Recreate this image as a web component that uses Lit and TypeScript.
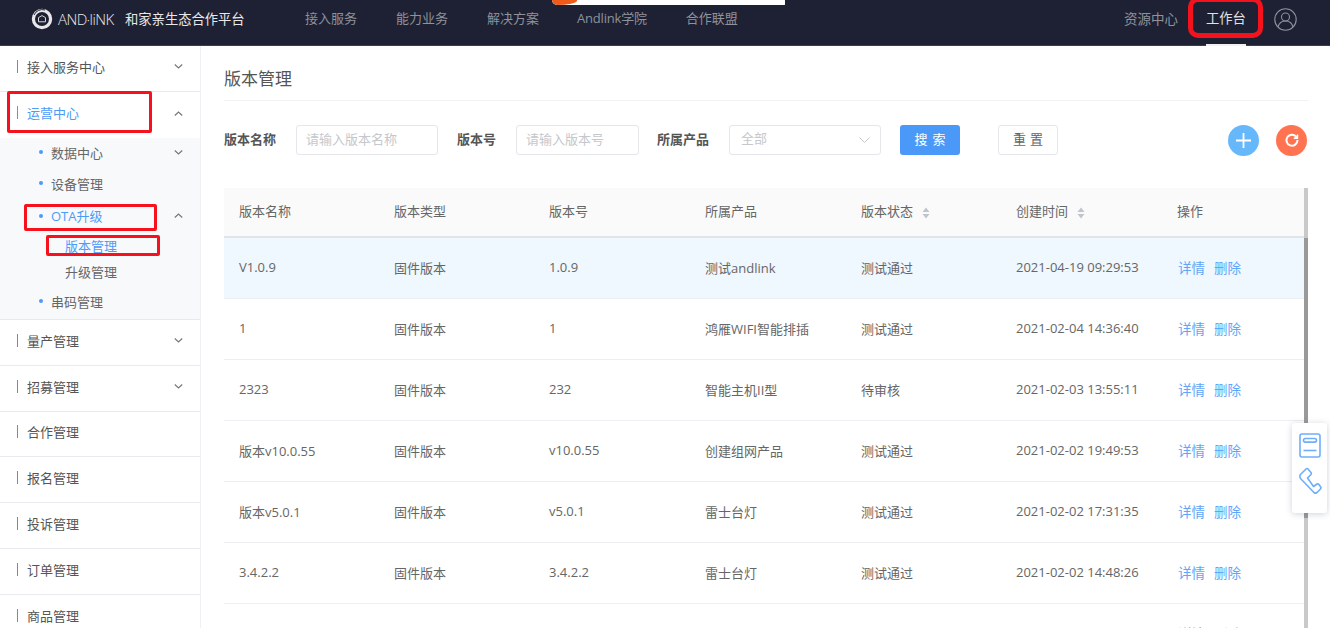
import { LitElement, html, css } from "lit";
import { customElement } from "lit/decorators.js";

const rows = [
  ["V1.0.9", "固件版本", "1.0.9", "测试andlink", "测试通过", "2021-04-19 09:29:53"],
  ["1", "固件版本", "1", "鸿雁WIFI智能排插", "测试通过", "2021-02-04 14:36:40"],
  ["2323", "固件版本", "232", "智能主机II型", "待审核", "2021-02-03 13:55:11"],
  ["版本v10.0.55", "固件版本", "v10.0.55", "创建组网产品", "测试通过", "2021-02-02 19:49:53"],
  ["版本v5.0.1", "固件版本", "v5.0.1", "雷士台灯", "测试通过", "2021-02-02 17:31:35"],
  ["3.4.2.2", "固件版本", "3.4.2.2", "雷士台灯", "测试通过", "2021-02-02 14:48:26"],
  ["3.4.2.1", "固件版本", "3.4.2.1", "智能主机II型", "待审核", "2021-02-01 10:12:08"],
];

const chevron = (up: boolean) => html`<svg class="chev" width="9" height="5" viewBox="0 0 9 5" fill="none" stroke="#74787f" stroke-width="1.2"><path d="${up ? "M.8 4.500L4.500 1 8.200 4.500" : "M.8.5L4.500 4 8.200.5"}"/></svg>`;
const sorter = html`<svg class="sort" width="8" height="12" viewBox="0 0 8 12" fill="#c0c4cc"><path d="M4 .5L7.500 5H.5zM4 11.500L.5 7h7z"/></svg>`;

@customElement("app-root")
export class AppRoot extends LitElement {
  static styles = css`
    :host { display: block; position: relative; width: 100%; height: 100vh; overflow: hidden; background: #fff;
      font-family: "Open Sans", "Noto Sans CJK SC", sans-serif; font-size: 13px; color: #666; }
    .top { height: 45px; background: #1e2133; border-bottom: 1px solid #3a3d4c; display: flex; align-items: center; position: relative; }
    .logo { display: flex; align-items: center; margin-left: 31px; width: 274px; color: #e8e8ea; margin-top: -8px; }
    .logoword { font-size: 15px; font-weight: 300; letter-spacing: -.6px; margin-left: 5px; width: 67px; white-space: nowrap; }
    .platform { font-size: 13.3px; white-space: nowrap; }
    .nav { display: flex; flex: 1; gap: 39px; color: #8f919b; margin-top: -10px; }
    .nav .al { letter-spacing: -.2px; margin: 0 0 0 -1px; }
    .right { display: flex; align-items: center; color: #8f919b; }
    .res { margin-right: 28px; font-size: 13.5px; margin-top: -10px; }
    .work { color: #e2e2e4; width: 40px; margin-right: 28px; font-size: 13.3px; margin-top: -10px; white-space: nowrap; }
    .under { position: absolute; left: 1206px; top: 44px; width: 40px; height: 2px; background: #f1f1f1; }
    .user { margin-right: 33px; display: block; margin-top: -7px; }
    .strip { position: absolute; left: 552px; top: 0; width: 233px; height: 5px; background: #fff; border-radius: 0 0 1px 6px; overflow: hidden; }
    .strip i { display: block; width: 25px; height: 5px; background: #f05a1a; border-radius: 0 0 24px 6px / 0 0 5px 5px; }

    .body { display: flex; height: 582px; }
    .side { width: 200px; flex: none; border-right: 1px solid #eef0f3; }
    .m { height: 46px; box-sizing: border-box; display: flex; align-items: center; border-bottom: 1px solid #e8eaee; padding: 0 17px 4px 17px; color: #555; }
    .m.np { height: 45.8px; }
    .m::before { content: ""; width: 1px; height: 13px; background: #4d92ee; margin-right: 9px; flex: none; }
    .m.act { color: #4d9bf8; border-bottom: 0; padding-bottom: 6px; }
    .m.act::before { background: #4d9bf8; }
    .m.act .chev { margin-top: 3px; }
    .m span { flex: 1; }
    .chev { display: block; flex: none; }
    .subs { background: #f8f9fb; height: 182px; border-bottom: 1px solid #e8eaee; box-sizing: border-box; display: grid; grid-template-rows: 30px 32px 33px 26px 26px 34px; }
    .s { display: flex; align-items: center; padding: 0 17px 2px 39px; color: #666; }
    .s::before { content: ""; width: 4px; height: 4px; border-radius: 50%; background: #4d9bf8; margin-right: 8px; flex: none; }
    .s span { flex: 1; }
    .s.act { color: #4d9bf8; }
    .t { padding: 0 0 2px 65px; display: flex; align-items: center; color: #666; }
    .t.act { color: #4d9bf8; }

    .main { flex: 1; padding: 0 22px 0 23px; min-width: 0; }
    .title { height: 55px; box-sizing: border-box; border-bottom: 1px solid #f2f2f3; font-size: 17px; color: #555; display: flex; align-items: center; padding-top: 8px; }
    .filter { display: flex; align-items: center; margin-top: 24px; height: 30px; }
    .lab { font-weight: 700; color: #555; margin-right: 20px; padding-bottom: 4px; }
    .inp { height: 30px; box-sizing: border-box; border: 1px solid #e4e6ea; border-radius: 3px; color: #c5c7cc; padding: 0 0 4px 9px; display: flex; align-items: center; }
    .i1 { width: 142px; margin-right: 19px; }
    .i2 { width: 123px; margin-right: 18px; }
    .i3 { width: 152px; margin-right: 19px; justify-content: space-between; padding: 0 10px 5px 11px; }
    .i3 svg { margin-top: 5px; }
    .btn { height: 30px; box-sizing: border-box; border-radius: 3px; display: flex; align-items: center; justify-content: center; width: 60px; padding-bottom: 4px; }
    .primary { background: #4a98f7; color: #fff; margin-right: 38px; letter-spacing: 5px; padding-left: 5px; }
    .plain { border: 1px solid #e4e6ea; color: #666; letter-spacing: 4px; padding-left: 4px; }
    .round { width: 31px; height: 31px; border-radius: 50%; display: flex; align-items: center; justify-content: center; flex: none; }
    .grow { flex: 1; }
    .blue { background: #66b8fb; margin-right: 17px; }
    .orange { background: #ff7350; margin-right: 1px; }

    .tbl { margin-top: 33px; display: flex; flex-direction: column; }
    .row { display: grid; grid-template-columns: 155px 155px 156px 156px 155px 161px 1fr; align-items: center; height: 61px; border-bottom: 1px solid #eceef1; box-sizing: border-box; margin-right: 4px; padding-bottom: 2px; }
    .row > div { padding-left: 15px; white-space: nowrap; display: flex; align-items: center; gap: 9px; }
    .head { height: 50px; background: #fafafa; border-bottom: 2px solid #e1e4e8; color: #666; padding-bottom: 3px; }
    .sort { margin-top: 4px; }
    .hl { background: #eff7ff; }
    .row > .ops { gap: 9px; color: #5ea6f9; font-size: 13.5px; padding-left: 16px; }
    .bar { position: absolute; left: 1304px; top: 188px; width: 4px; height: 440px; background: linear-gradient(#c9c9c9 0 50px, #999 50px 330px, #c9c9c9 330px); }
    .float { position: absolute; left: 1292px; top: 423px; width: 35px; height: 90px; background: #fff; border-radius: 3px; box-shadow: 0 1px 6px rgba(60,80,110,.25); display: flex; flex-direction: column; align-items: center; gap: 9px; padding-top: 10px; box-sizing: border-box; }
    .float svg { display: block; }
    .mark { position: absolute; border: 3px solid #f5121c; border-radius: 2px; box-sizing: border-box; pointer-events: none; }
    .m1 { left: 1188px; top: -3px; width: 75px; height: 41px; border-width: 5px; border-radius: 10px; }
    .m2 { left: 7px; top: 91px; width: 145px; height: 42px; }
    .m3 { left: 24px; top: 204px; width: 133px; height: 27px; }
    .m4 { left: 46px; top: 235px; width: 114px; height: 21px; }
  `;

  render() {
    return html`
      <div class="top">
        <div class="logo">
          <svg width="22" height="22" viewBox="0 0 22 22" fill="none">
            <circle cx="11" cy="11" r="8.600" stroke="#e8e8ea" stroke-width="3.200"/>
            <path d="M3 7A9 9 0 0 1 14 2" stroke="#1e2133" stroke-width="1"/>
            <path d="M7.500 13.800V9.600L11 7.600l3.500 2v4.200z" stroke="#d8d8da" stroke-width="1"/>
          </svg>
          <span class="logoword">AND·liNK</span>
          <span class="platform">和家亲生态合作平台</span>
        </div>
        <div class="nav"><span>接入服务</span><span>能力业务</span><span>解决方案</span><span class="al">Andlink学院</span><span>合作联盟</span></div>
        <div class="right">
          <span class="res">资源中心</span>
          <span class="work">工作台</span>
          <svg class="user" width="23" height="23" viewBox="0 0 23 23" fill="none" stroke="#8f919b" stroke-width="1.100">
            <circle cx="11.500" cy="11.500" r="10.700"/><circle cx="11.500" cy="9" r="4"/><path d="M4 19c1-4 4-6 7.500-6s6.500 2 7.500 6"/>
          </svg>
        </div>
        <div class="under"></div>
        <div class="strip"><i></i></div>
      </div>
      <div class="body">
        <div class="side">
          <div class="m"><span>接入服务中心</span>${chevron(false)}</div>
          <div class="m act"><span>运营中心</span>${chevron(true)}</div>
          <div class="subs">
            <div class="s"><span>数据中心</span>${chevron(false)}</div>
            <div class="s"><span>设备管理</span></div>
            <div class="s act"><span>OTA升级</span>${chevron(true)}</div>
            <div class="t act">版本管理</div>
            <div class="t">升级管理</div>
            <div class="s"><span>串码管理</span></div>
          </div>
          <div class="m np"><span>量产管理</span>${chevron(false)}</div>
          <div class="m np"><span>招募管理</span>${chevron(false)}</div>
          <div class="m np"><span>合作管理</span></div>
          <div class="m np"><span>报名管理</span></div>
          <div class="m np"><span>投诉管理</span></div>
          <div class="m np"><span>订单管理</span></div>
          <div class="m np"><span>商品管理</span></div>
        </div>
        <div class="main">
          <div class="title">版本管理</div>
          <div class="filter">
            <span class="lab">版本名称</span><div class="inp i1">请输入版本名称</div>
            <span class="lab">版本号</span><div class="inp i2">请输入版本号</div>
            <span class="lab">所属产品</span>
            <div class="inp i3">全部<svg width="11" height="6" viewBox="0 0 11 6" fill="none" stroke="#c5c7cc"><path d="M.5.5l5 5 5-5"/></svg></div>
            <div class="btn primary">搜索</div>
            <div class="btn plain">重置</div>
            <div class="grow"></div>
            <div class="round blue"><svg width="15" height="15" viewBox="0 0 15 15" stroke="#fff" stroke-width="1.800"><path d="M7.500 0v15M0 7.500h15"/></svg></div>
            <div class="round orange"><svg width="14" height="14" viewBox="0 0 14 14" fill="none" stroke="#fff" stroke-width="2"><path d="M11.800 4.500A5.500 5.500 0 1 0 12.500 7"/><path d="M12.600 1.500v3.800H8.800" stroke-width="1.200" fill="#fff"/></svg></div>
          </div>
          <div class="tbl">
            <div class="row head">
              <div>版本名称</div><div>版本类型</div><div>版本号</div><div>所属产品</div>
              <div>版本状态${sorter}</div><div>创建时间${sorter}</div><div>操作</div>
            </div>
            ${rows.map((r, i) => html`<div class="row ${i === 0 ? "hl" : ""}">
              ${r.map((c) => html`<div>${c}</div>`)}
              <div class="ops"><span>详情</span><span>删除</span></div>
            </div>`)}
          </div>
        </div>
      </div>
      <div class="bar"></div>
      <div class="float">
        <svg width="22" height="25" viewBox="0 0 22 25" fill="none" stroke="#6eaefb" stroke-width="1.600">
          <rect x="1" y="1" width="20" height="23" rx="2"/><rect x="4.500" y="5.500" width="13" height="3.600" rx="1.800"/><path d="M4.500 17.500h13"/>
        </svg>
        <svg width="24" height="28" viewBox="0 0 24 28" fill="none" stroke="#6eaefb" stroke-width="1.600" stroke-linejoin="round">
          <path d="M2.500 7.500L8 2Q9 1 10 2L13 5.500Q13.700 6.500 13 7.500L9.500 11 15.500 19.500 19 17Q20 16.500 21 17.500L23 20.500Q23 21.500 22.500 22L19 25.500Q17 27 15.500 25L2.500 11.500Q1.200 9 2.500 7.500Z"/>
        </svg>
      </div>
      <div class="mark m1"></div><div class="mark m2"></div><div class="mark m3"></div><div class="mark m4"></div>
    `;
  }
}
